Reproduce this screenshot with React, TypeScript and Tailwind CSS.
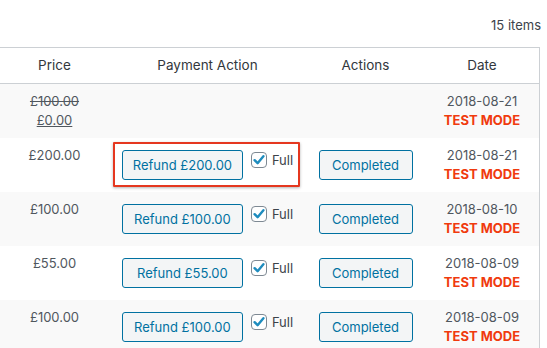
import React from "react";

const rows = [
  { price: null, refund: null, date: "2018-08-21", highlight: false },
  { price: "£200.00", refund: "Refund £200.00", date: "2018-08-21", highlight: true },
  { price: "£100.00", refund: "Refund £100.00", date: "2018-08-10", highlight: false },
  { price: "£55.00", refund: "Refund £55.00", date: "2018-08-09", highlight: false },
  { price: "£100.00", refund: "Refund £100.00", date: "2018-08-09", highlight: false },
];

function Check() {
  return (
    <span className="flex h-[16px] w-[16px] items-center justify-center rounded-[4px] border border-[#7e8993] bg-white">
      <svg width="14" height="14" viewBox="0 0 14 14">
        <path d="M2.6 7.2 L5.6 10.2 L11.4 3.2" fill="none" stroke="#1e8cbe" strokeWidth="2.4" strokeLinecap="round" strokeLinejoin="round" />
      </svg>
    </span>
  );
}

export default function App() {
  return (
    <div className="h-[348px] w-[547px] overflow-hidden bg-white text-[13px] leading-[19px] text-[#50575e]" style={{ fontFamily: "Inter, 'Noto Sans', sans-serif" }}>
      <div className="flex h-[47px] w-[547px] justify-end pr-[6px] pt-[16px] text-[#3c434a]">15 items</div>
      <div className="w-[540px] border-r border-t border-[#ccd0d4]">
        <div className="grid h-[36px] grid-cols-[109px_197px_119px_114px] items-center border-b border-[#ccd0d4] text-center text-[13.5px] text-[#32373c]">
          <div>Price</div>
          <div>Payment Action</div>
          <div>Actions</div>
          <div>Date</div>
        </div>
        {rows.map((r, i) => (
          <div key={i} className={`grid h-[54px] grid-cols-[109px_197px_119px_114px] ${i % 2 === 0 ? "bg-[#f9f9f9]" : "bg-white"}`}>
            <div className="pt-[8px] text-center">
              {r.price === null ? (
                <>
                  <div className="line-through">£100.00</div>
                  <div className="underline">£0.00</div>
                </>
              ) : (
                <div>{r.price}</div>
              )}
            </div>
            <div className="relative flex items-center justify-center">
              {r.refund && (
                <>
                  <div className="flex items-center">
                    <div className="flex h-[30px] w-[121px] items-center justify-center rounded-[3px] border border-[#0071a1] bg-[#f3f5f6] text-[#0071a1]">
                      {r.refund}
                    </div>
                    <div className="mb-[10px] ml-[8px] flex items-center gap-[5px] text-[#3c434a]">
                      <Check />
                      <span>Full</span>
                    </div>
                  </div>
                  {r.highlight && (
                    <div className="absolute left-[4px] top-[4px] h-[45px] w-[187px] rounded-[1px] border-2 border-[#e5371f] shadow-[0_1px_3px_rgba(0,0,0,0.3)]" />
                  )}
                </>
              )}
            </div>
            <div className="flex items-center justify-center">
              {r.refund && (
                <div className="flex h-[30px] w-[94px] items-center justify-center rounded-[3px] border border-[#0071a1] bg-[#f3f5f6] text-[#0071a1]">
                  Completed
                </div>
              )}
            </div>
            <div className="pt-[8px] text-center">
              <div>{r.date}</div>
              <div className="font-bold text-[#f03a0e]">TEST MODE</div>
            </div>
          </div>
        ))}
      </div>
    </div>
  );
}
